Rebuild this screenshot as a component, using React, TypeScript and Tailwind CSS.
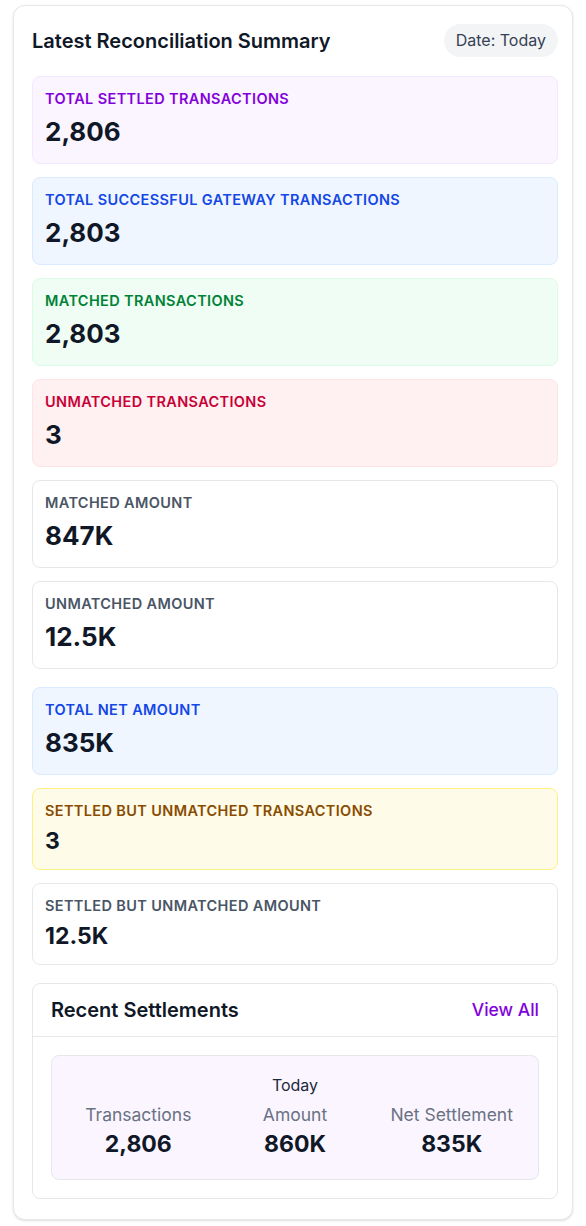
import React from "react";

type Stat = {
  label: string;
  value: string;
  box: string;
  labelColor: string;
  small?: boolean;
};

const topStats: Stat[] = [
  { label: "Total Settled Transactions", value: "2,806", box: "bg-purple-50 border-purple-100", labelColor: "text-purple-700" },
  { label: "Total Successful Gateway Transactions", value: "2,803", box: "bg-blue-50 border-blue-100", labelColor: "text-blue-700" },
  { label: "Matched Transactions", value: "2,803", box: "bg-green-50 border-green-100", labelColor: "text-green-700" },
  { label: "Unmatched Transactions", value: "3", box: "bg-rose-50 border-rose-100", labelColor: "text-rose-700" },
  { label: "Matched Amount", value: "847K", box: "bg-white border-gray-200", labelColor: "text-gray-600" },
  { label: "Unmatched Amount", value: "12.5K", box: "bg-white border-gray-200", labelColor: "text-gray-600" },
];

const bottomStats: Stat[] = [
  { label: "Total Net Amount", value: "835K", box: "bg-blue-50 border-blue-100", labelColor: "text-blue-700" },
  { label: "Settled But Unmatched Transactions", value: "3", box: "bg-yellow-50 border-yellow-200", labelColor: "text-yellow-800", small: true },
  { label: "Settled But Unmatched Amount", value: "12.5K", box: "bg-white border-gray-200", labelColor: "text-gray-600", small: true },
];

function StatCard({ stat }: { stat: Stat }) {
  return (
    <div className={`rounded-lg border p-3 ${stat.box}`}>
      <p className={`text-[14.5px] font-semibold uppercase tracking-wide leading-5 ${stat.labelColor}`}>
        {stat.label}
      </p>
      <p
        className={`mt-1 font-bold text-gray-900 ${
          stat.small ? "text-[23px] leading-8" : "text-[26px] leading-[38px]"
        }`}
      >
        {stat.value}
      </p>
    </div>
  );
}

export default function App() {
  return (
    <div
      className="min-h-screen bg-white px-[13px] pt-[5px] pb-2"
      style={{ fontFamily: "Inter, 'Noto Sans', sans-serif" }}
    >
      <div className="rounded-xl border border-gray-200 bg-white pl-[18px] pr-[14px] pt-[18px] pb-5 shadow-sm">
        {/* Header */}
        <div className="flex items-center justify-between">
          <h2 className="text-xl font-semibold text-gray-900">Latest Reconciliation Summary</h2>
          <span className="rounded-full bg-gray-100 px-3 py-1 text-base leading-[25px] text-gray-700">
            Date: Today
          </span>
        </div>

        {/* Stats */}
        <div className="mt-[19px] flex flex-col gap-[13px]">
          {topStats.map((s) => (
            <StatCard key={s.label} stat={s} />
          ))}
        </div>
        <div className="mt-[18px] flex flex-col gap-[13px]">
          {bottomStats.map((s) => (
            <StatCard key={s.label} stat={s} />
          ))}
        </div>

        {/* Recent Settlements */}
        <div className="mt-[18px] rounded-lg border border-gray-200 bg-white">
          <div className="flex items-center justify-between border-b border-gray-200 px-[18px] py-3">
            <h3 className="text-xl font-semibold leading-7 text-gray-900">Recent Settlements</h3>
            <button className="text-[17.5px] font-medium text-purple-700">View All</button>
          </div>
          <div className="p-[18px]">
            <div className="rounded-lg border border-gray-200 bg-purple-50 px-2 pt-[17px] pb-[18px] text-center">
              <p className="text-base leading-6 text-gray-800">Today</p>
              <div className="mt-[6px] grid grid-cols-3">
                <div>
                  <p className="text-[17.5px] leading-6 text-gray-500">Transactions</p>
                  <p className="text-[23px] font-bold leading-[34px] text-gray-900">2,806</p>
                </div>
                <div>
                  <p className="text-[17.5px] leading-6 text-gray-500">Amount</p>
                  <p className="text-[23px] font-bold leading-[34px] text-gray-900">860K</p>
                </div>
                <div>
                  <p className="text-[17.5px] leading-6 text-gray-500">Net Settlement</p>
                  <p className="text-[23px] font-bold leading-[34px] text-gray-900">835K</p>
                </div>
              </div>
            </div>
          </div>
        </div>
      </div>
    </div>
  );
}
